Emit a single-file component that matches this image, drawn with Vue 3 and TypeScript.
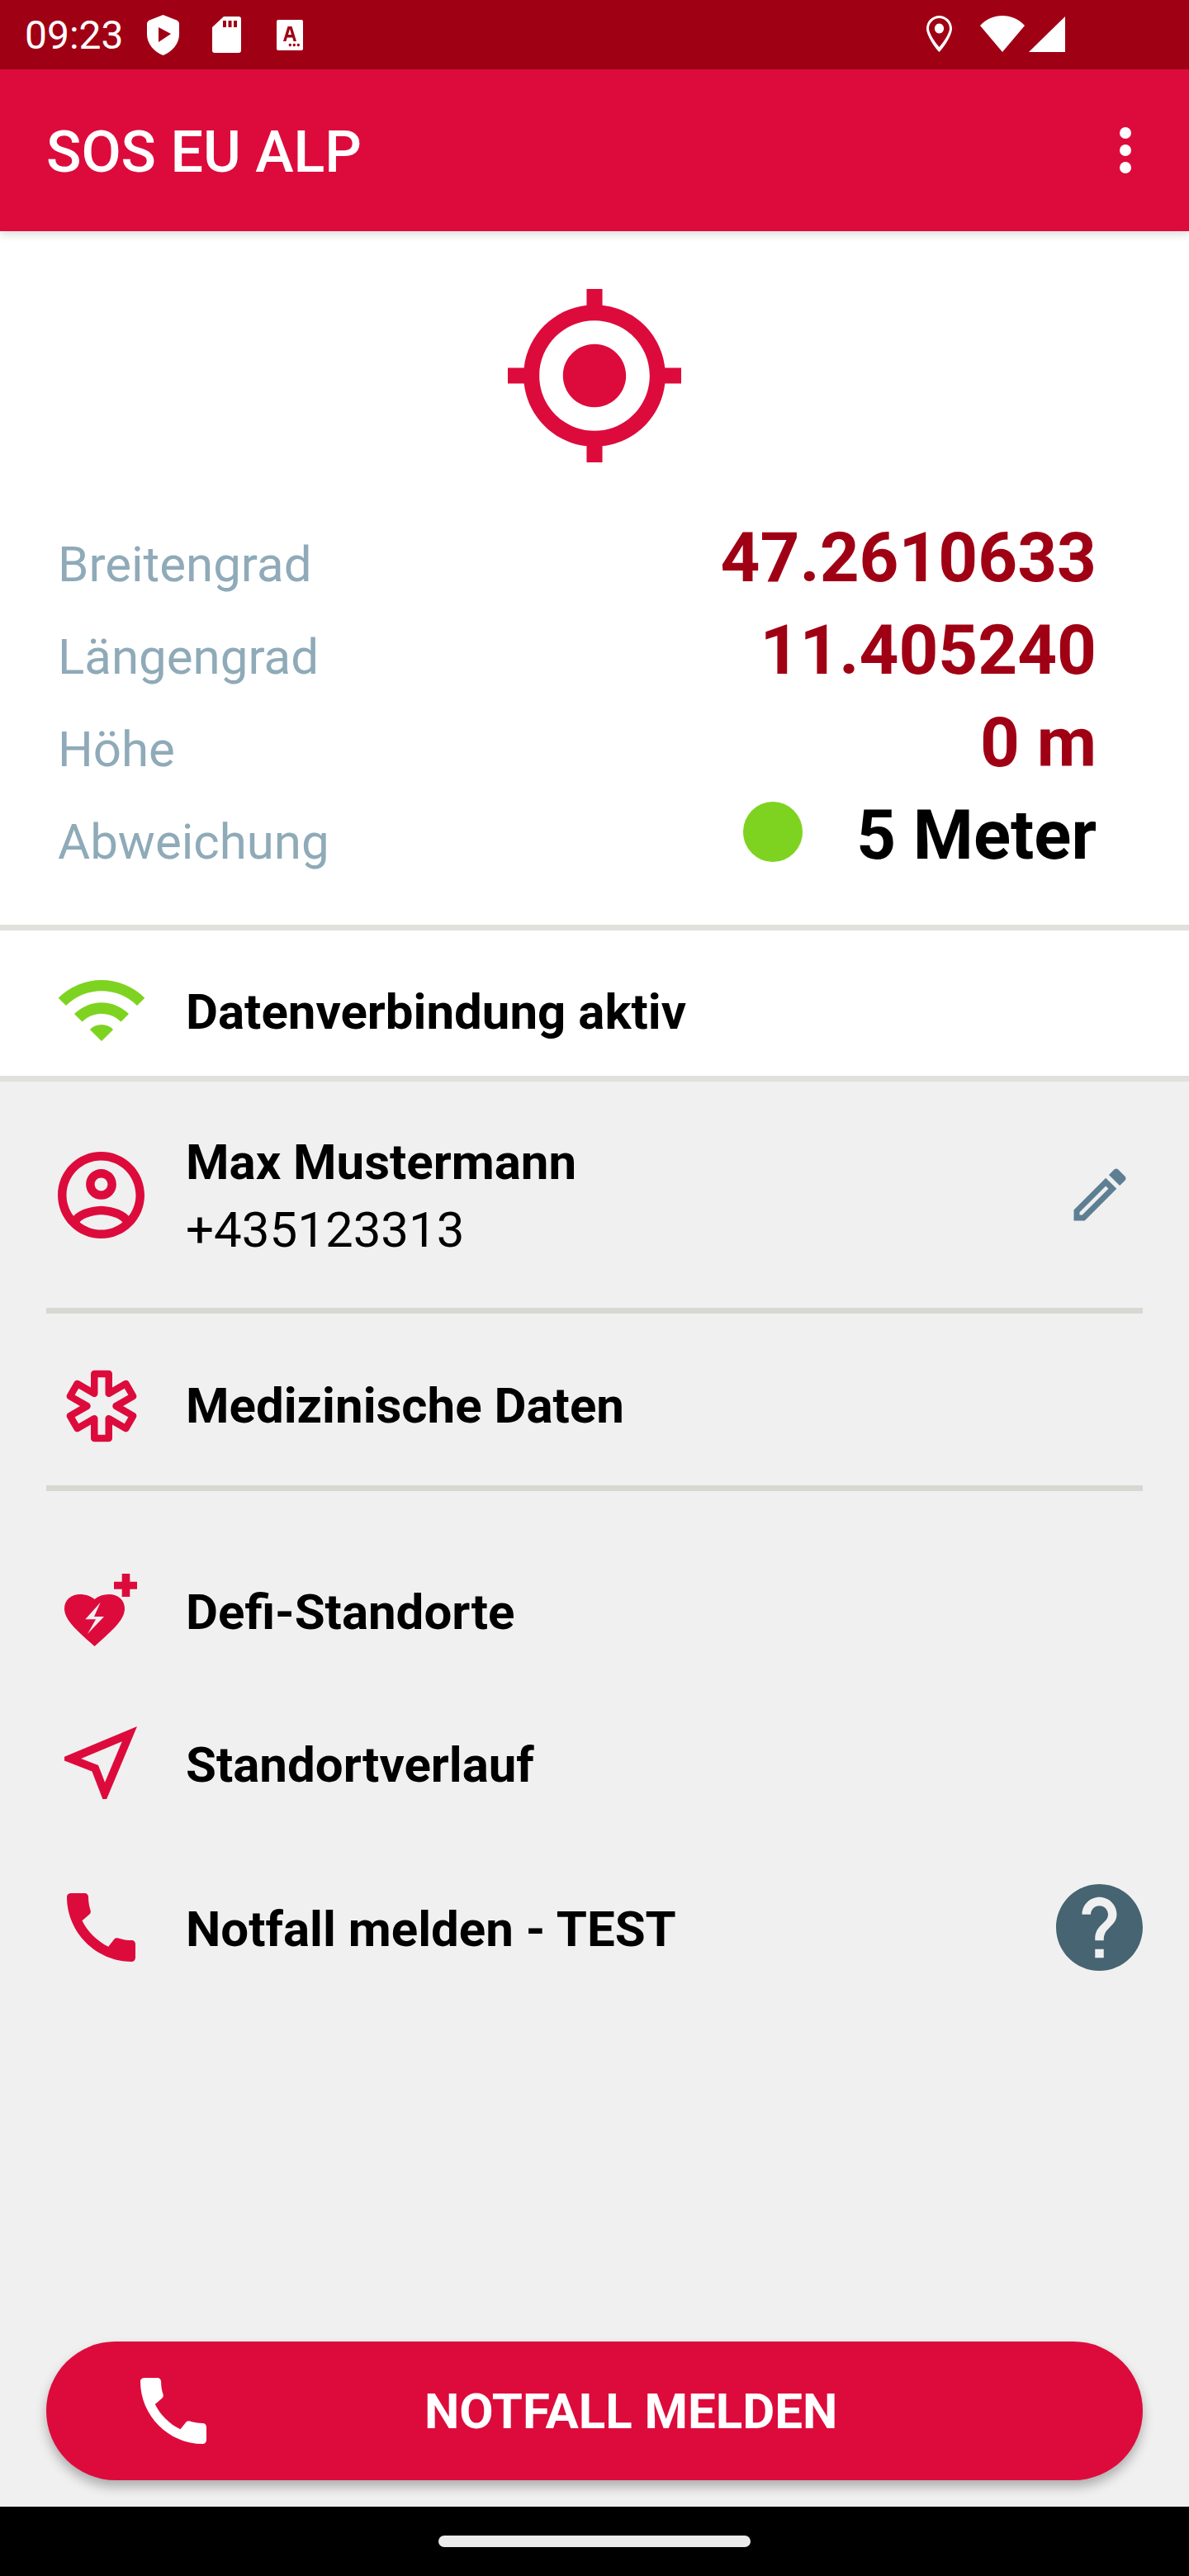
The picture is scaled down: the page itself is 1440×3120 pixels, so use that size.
<script setup lang="ts">
import { computed } from 'vue'

interface GpsRow { label: string; value: string; accuracy?: boolean }

const gpsRows: GpsRow[] = [
  { label: 'Breitengrad', value: '47.2610633' },
  { label: 'Längengrad', value: '11.405240' },
  { label: 'Höhe', value: '0 m' },
  { label: 'Abweichung', value: '5 Meter', accuracy: true },
]

const starPath = computed(() => {
  const w = 8.75
  const L = 39
  const d = w / Math.sin(Math.PI / 6)
  const pts: string[] = []
  for (let i = 0; i < 6; i++) {
    const t = (i * Math.PI) / 3 - Math.PI / 2
    const ax = Math.cos(t)
    const ay = Math.sin(t)
    const nx = -ay
    const ny = ax
    pts.push(`${(ax * L - nx * w).toFixed(2)} ${(ay * L - ny * w).toFixed(2)}`)
    pts.push(`${(ax * L + nx * w).toFixed(2)} ${(ay * L + ny * w).toFixed(2)}`)
    const m = t + Math.PI / 6
    pts.push(`${(Math.cos(m) * d).toFixed(2)} ${(Math.sin(m) * d).toFixed(2)}`)
  }
  return 'M' + pts.join('L') + 'Z'
})

const callPath =
  'M20.01 15.38c-1.23 0-2.42-.2-3.53-.56-.35-.12-.74-.03-1.01.24l-1.57 1.97c-2.83-1.35-5.48-3.9-6.89-6.83l1.95-1.66c.27-.28.35-.67.24-1.02-.37-1.11-.56-2.3-.56-3.53 0-.54-.45-.99-.99-.99H4.19C3.65 3 3 3.24 3 3.99 3 13.28 10.73 21 20.01 21c.71 0 .99-.63.99-1.18v-3.45c0-.54-.45-.99-.99-.99z'
</script>

<template>
  <div class="screen">
    <div class="statusbar">
      <span class="time">09:23</span>
      <svg class="st-shield" viewBox="0 0 39 49"><path fill="#fff" fill-rule="evenodd" d="M19.5 0 L36 6.5 Q39 8 39 11 V24 C39 35 30 45 19.5 49 C9 45 0 35 0 24 V11 Q0 8 3 6.5 Z M14 15 V33 L29 23 L14 15 Z" /></svg>
      <svg class="st-sd" viewBox="0 0 35 44"><path fill="#fff" fill-rule="evenodd" d="M14 0 H32 Q35 0 35 3 V41 Q35 44 32 44 H3 Q0 44 0 41 V13 Z M13 5 V13 H17 V5 Z M19.5 5 V13 H23.5 V5 Z M26 5 V13 H30 V5 Z" /></svg>
      <svg class="st-a" viewBox="0 0 32 37"><path fill="#fff" fill-rule="evenodd" d="M2 0 H30 Q32 0 32 2 V35 Q32 37 30 37 H2 Q0 37 0 35 V2 Q0 0 2 0 Z M13.5 8 L8 26 H11.5 L12.7 21.5 H19.3 L20.5 26 H24 L18.5 8 Z M14 18 L16 11 L18 18 Z M18 30.5 a1.7 1.7 0 1 0 0 .1 Z M23 30.5 a1.7 1.7 0 1 0 0 .1 Z M28 30.5 a1.7 1.7 0 1 0 0 .1 Z" /></svg>
      <div class="st-spacer"></div>
      <svg class="st-pin" viewBox="0 0 31 44"><path fill="#fff" fill-rule="evenodd" d="M15.5 0 C24 0 31 7 31 15.5 C31 24 20 40 15.5 44 C11 40 0 24 0 15.5 C0 7 7 0 15.5 0 Z M15.5 3 C9 3 3 8.5 3 15.5 C3 21.5 11 33 15.5 38 C20 33 28 21.5 28 15.5 C28 8.5 22 3 15.5 3 Z M15.5 9.5 a5.6 6 0 1 0 .01 0 Z" /></svg>
      <svg class="st-wifi" viewBox="0 0 54 44"><path fill="#fff" d="M27 44 L0 12 C7 4 17 0 27 0 C37 0 47 4 54 12 Z" /></svg>
      <svg class="st-signal" viewBox="0 0 44 43"><path fill="#fff" d="M44 0 V43 H0 Z" /></svg>
    </div>

    <header class="toolbar">
      <span class="title">SOS EU ALP</span>
      <div class="overflow"><i></i><i></i><i></i></div>
    </header>

    <section class="gps">
      <svg class="gps-icon" viewBox="1 1 22 22"><path fill="#DD0B3C" d="M12 8c-2.21 0-4 1.79-4 4s1.79 4 4 4 4-1.79 4-4-1.79-4-4-4zm8.94 3c-.46-4.17-3.77-7.48-7.94-7.94V1h-2v2.06C6.83 3.52 3.52 6.83 3.06 11H1v2h2.06c.46 4.17 3.77 7.48 7.94 7.94V23h2v-2.06c4.17-.46 7.48-3.77 7.94-7.94H23v-2h-2.06zM12 19c-3.87 0-7-3.13-7-7s3.13-7 7-7 7 3.13 7 7-3.13 7-7 7z" /></svg>
      <div class="gps-rows">
        <div v-for="row in gpsRows" :key="row.label" class="gps-row">
          <span class="gps-label">{{ row.label }}</span>
          <span v-if="row.accuracy" class="gps-dot"></span>
          <span class="gps-value" :class="{ black: row.accuracy }">{{ row.value }}</span>
        </div>
      </div>
    </section>

    <section class="conn">
      <span class="icon-cell">
        <svg class="i-wifi" viewBox="-53 -75 106 76"><path fill="#7ED321" d="M-52.3-52.3A74 74 0 0 1 52.3-52.3L43-43A60.7 60.7 0 0 0-43-43ZM-33-33A46.7 46.7 0 0 1 33-33L23.5-23.5A33.3 33.3 0 0 0-23.5-23.5ZM-14.1-14.1A20 20 0 0 1 14.1-14.1L0 0Z" /></svg>
      </span>
      <span class="row-text">Datenverbindung aktiv</span>
    </section>

    <main class="menu">
      <div class="row user-row">
        <span class="icon-cell">
          <svg class="i-account" viewBox="2 2 20 20"><path fill="#DD0B3C" d="M12 2C6.48 2 2 6.48 2 12s4.48 10 10 10 10-4.48 10-10S17.52 2 12 2zM7.07 18.28c.43-.9 3.05-1.78 4.93-1.78s4.51.88 4.93 1.78C15.57 19.36 13.86 20 12 20s-3.57-.64-4.93-1.72zm11.29-1.45c-1.43-1.74-4.9-2.33-6.36-2.33s-4.93.59-6.36 2.33C4.62 15.49 4 13.82 4 12c0-4.41 3.59-8 8-8s8 3.59 8 8c0 1.82-.62 3.49-1.64 4.83zM12 6c-1.94 0-3.5 1.56-3.5 3.5S10.06 13 12 13s3.5-1.56 3.5-3.5S13.94 6 12 6zm0 5c-.83 0-1.5-.67-1.5-1.5S11.17 8 12 8s1.5.67 1.5 1.5S12.83 11 12 11z" /></svg>
        </span>
        <div class="user-text">
          <span class="row-text">Max Mustermann</span>
          <span class="phone">+435123313</span>
        </div>
        <svg class="i-edit" viewBox="0 0 24 24"><path fill="#5E7F93" d="M3 17.25V21h3.75L17.81 9.94l-3.75-3.75L3 17.25zM5.92 19H5v-.92l9.06-9.06.92.92L5.92 19zM20.71 7.04c.39-.39.39-1.02 0-1.41l-2.34-2.34c-.2-.2-.45-.29-.71-.29s-.51.1-.7.29l-1.83 1.83 3.75 3.75 1.83-1.83z" /></svg>
      </div>
      <div class="rule"></div>
      <div class="row med-row">
        <span class="icon-cell">
          <svg class="i-star" viewBox="-44 -44 88 88"><path fill="none" stroke="#DD0B3C" stroke-width="8.5" stroke-linejoin="round" :d="starPath" /></svg>
        </span>
        <span class="row-text">Medizinische Daten</span>
      </div>
      <div class="rule"></div>
      <div class="row defi-row">
        <span class="icon-cell">
          <svg class="i-defi" viewBox="0 0 88 88"><path fill="#DD0B3C" d="M69.7 0H79.3V9.7H88V18.7H79.3V28H69.7V18.7H60V9.7H69.7Z" /><path fill="#DD0B3C" fill-rule="evenodd" d="M36.5 88 L31 83 C12 66 0 55 0 42 C0 32 8 25 19 25 C25 25 32 27 36.5 31 C41 27 47 25 54 25 C65 25 73 32 73 42 C73 55 61 66 42 83 Z M43.7 34.7 L25.3 55.3 H38 L28 73 L48 52 H36 Z" /></svg>
        </span>
        <span class="row-text">Defi-Standorte</span>
      </div>
      <div class="row route-row">
        <span class="icon-cell">
          <svg class="i-route" viewBox="3 3 18 18"><path fill="#DD0B3C" d="M17.27 6.73l-4.24 10.13-1.32-3.42-.32-.83-.82-.32-3.43-1.33 10.13-4.23M21 3L3 10.53v.98l6.84 2.65L12.48 21h.98L21 3z" /></svg>
        </span>
        <span class="row-text">Standortverlauf</span>
      </div>
      <div class="row report-row">
        <span class="icon-cell">
          <svg class="i-call" viewBox="3 3 18 18"><path fill="#DD0B3C" :d="callPath" /></svg>
        </span>
        <span class="row-text grow">Notfall melden - TEST</span>
        <svg class="i-help" viewBox="2 2 20 20"><path fill="#466472" d="M12 2C6.48 2 2 6.48 2 12s4.48 10 10 10 10-4.48 10-10S17.52 2 12 2zm1 17h-2v-2h2v2zm2.07-7.75l-.9.92C13.45 12.9 13 13.5 13 15h-2v-.5c0-1.1.45-2.1 1.17-2.83l1.24-1.26c.37-.36.59-.86.59-1.41 0-1.1-.9-2-2-2s-2 .9-2 2H8c0-2.21 1.79-4 4-4s4 1.79 4 4c0 .88-.36 1.68-.93 2.25z" /></svg>
      </div>
      <div class="menu-fill"></div>
      <button class="sos-btn" type="button">
        <svg class="i-btn-call" viewBox="3 3 18 18"><path fill="#fff" :d="callPath" /></svg>
        <span class="btn-label">NOTFALL MELDEN</span>
      </button>
    </main>

    <footer class="navbar"><span class="home"></span></footer>
  </div>
</template>

<style>
html, body { margin: 0; padding: 0; background: #000; }
</style>

<style scoped>
.screen {
  width: 1440px;
  height: 3120px;
  display: flex;
  flex-direction: column;
  background: #f0f0f0;
  font-family: Roboto, "Liberation Sans", sans-serif;
  overflow: hidden;
}
.statusbar {
  height: 84px;
  flex: none;
  background: #a00014;
  display: flex;
  align-items: flex-start;
  padding-left: 30px;
  padding-right: 150px;
  box-sizing: border-box;
  color: #fff;
}
.time { font-size: 48px; line-height: 84px; height: 84px; width: 148px; flex: none; margin-top: 1px; }
.statusbar svg { flex: none; display: block; }
.st-shield { width: 39px; height: 49px; margin-top: 18px; }
.st-sd { width: 35px; height: 44px; margin-top: 20px; margin-left: 40px; }
.st-a { width: 32px; height: 37px; margin-top: 24px; margin-left: 43px; }
.st-spacer { flex: 1; }
.st-pin { width: 31px; height: 44px; margin-top: 19px; }
.st-wifi { width: 54px; height: 44px; margin-top: 19px; margin-left: 34px; }
.st-signal { width: 44px; height: 43px; margin-top: 20px; margin-left: 5px; }

.toolbar {
  height: 196px;
  flex: none;
  background: #dd0b3c;
  display: flex;
  align-items: center;
  justify-content: space-between;
  padding: 0 70px 0 56px;
  box-sizing: border-box;
  box-shadow: 0 4px 10px rgba(0, 0, 0, 0.14);
  position: relative;
  z-index: 2;
}
.title { font-size: 70px; font-weight: 500; color: #fff; line-height: 1; padding-top: 3px; }
.overflow { display: flex; flex-direction: column; gap: 7px; }
.overflow i { display: block; width: 14px; height: 14px; border-radius: 50%; background: #fff; }

.gps {
  height: 840px;
  flex: none;
  background: #fff;
  box-sizing: border-box;
  padding-top: 70px;
  display: flex;
  flex-direction: column;
  align-items: center;
}
.gps-icon { width: 210px; height: 210px; display: block; flex: none; }
.gps-rows { width: 100%; margin-top: 60px; padding: 0 112px 0 70px; box-sizing: border-box; }
.gps-row { height: 112px; display: flex; align-items: baseline; }
.gps-label { font-size: 60px; color: #8faab8; flex: 1; }
.gps-value { font-size: 83.5px; font-weight: 700; color: #a00014; line-height: 112px; }
.gps-value.black { color: #000; }
.gps-dot { width: 72px; height: 73px; border-radius: 50%; background: #7ed321; margin: 15px 65px 0 0; flex: none; align-self: flex-start; }

.conn {
  height: 190px;
  flex: none;
  box-sizing: border-box;
  background: #fff;
  border-top: 7px solid #e0e0dc;
  border-bottom: 7px solid #e0e0dc;
  display: flex;
  align-items: center;
  padding: 18px 0 0 70px;
}
.conn .row-text { padding-top: 4px; }
.icon-cell { width: 155px; flex: none; display: flex; align-items: center; }
.icon-cell svg { display: block; flex: none; }
.i-wifi { width: 106px; height: 76px; }
.row-text { font-size: 60px; font-weight: 700; color: #000; line-height: 72px; }
.row-text.grow { flex: 1; }

.menu { flex: 1; display: flex; flex-direction: column; min-height: 0; }
.row { display: flex; align-items: center; padding-left: 70px; flex: none; }
.user-row { height: 274px; padding-right: 66px; }
.user-text { flex: 1; display: flex; flex-direction: column; padding-top: 8px; }
.phone { font-size: 60px; color: #000; line-height: 80px; margin-top: 6px; }
.i-account { width: 105px; height: 105px; }
.i-edit { width: 84px; height: 84px; flex: none; }
.rule { height: 7px; margin: 0 56px; background: #d8d8d2; flex: none; }
.med-row { height: 208px; padding: 15px 0 0 78.5px; box-sizing: border-box; }
.med-row .icon-cell { width: 146.5px; }
.i-star { width: 88px; height: 88px; }
.defi-row { height: 202px; padding-left: 78px; margin-top: 43px; }
.defi-row .icon-cell { width: 147px; }
.defi-row .row-text, .route-row .row-text, .report-row .row-text { padding-top: 6px; }
.i-defi { width: 88px; height: 88px; }
.route-row { height: 168px; padding-left: 78px; }
.route-row .icon-cell { width: 147px; }
.i-route { width: 88px; height: 88px; }
.report-row { height: 230px; padding: 0 56px 0 81px; }
.report-row .icon-cell { width: 144px; }
.i-call { width: 83px; height: 83px; }
.i-help { width: 105px; height: 105px; flex: none; }
.menu-fill { flex: 1; }

.sos-btn {
  height: 168px;
  margin: 0 56px 32px;
  border: 0;
  padding: 0 0 0 114px;
  flex: none;
  border-radius: 84px;
  background: #dd0b3c;
  box-shadow: 0 8px 14px rgba(0, 0, 0, 0.28);
  display: flex;
  align-items: center;
  font-family: inherit;
}
.i-btn-call { width: 80px; height: 80px; flex: none; display: block; }
.btn-label { font-size: 60px; font-weight: 700; color: #fff; margin-left: 264px; }

.navbar {
  height: 84px;
  flex: none;
  background: #000;
  display: flex;
  justify-content: center;
  align-items: flex-start;
  padding-top: 35px;
  box-sizing: border-box;
}
.home { width: 378px; height: 14px; border-radius: 7px; background: #ebebeb; display: block; }
</style>
